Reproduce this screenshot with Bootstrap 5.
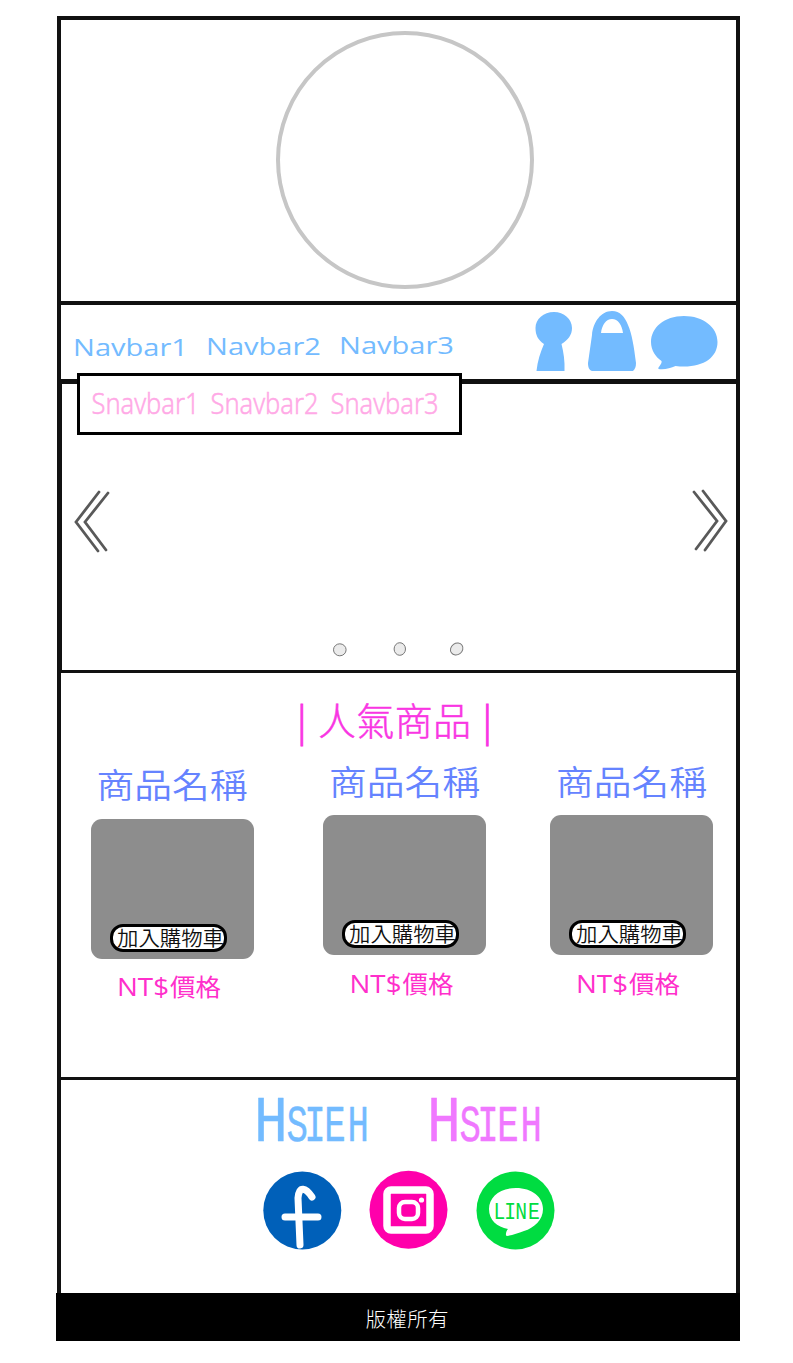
<!DOCTYPE html>
<html lang="zh-Hant">
<head>
<meta charset="utf-8">
<meta name="viewport" content="width=device-width, initial-scale=1">
<title>HSIEH</title>
<link href="https://cdn.jsdelivr.net/npm/bootstrap@5.3.0/dist/css/bootstrap.min.css" rel="stylesheet">
<style>
  body { background: #fff; font-family: "Open Sans", "Noto Sans CJK TC", sans-serif; }
  svg { display: block; overflow: visible; }
  a { text-decoration: none; }
  .frame { width: 683px; margin: 16px 0 0 57px; border: 4px solid #111; border-bottom: 0; }
  .masthead { height: 285px; border-bottom: 4px solid #111; padding-top: 11px; }
  .logo-ring { width: 258px; height: 258px; border: 4px solid #c6c6c6; margin-left: 13px; }
  .mainnav { height: 79px; border-bottom: 5px solid #111; padding: 0 18px 0 12px; }
  .nav-words text { font-size: 24px; fill: #73bbff; }
  .subnav { left: 16px; top: 68px; width: 385px; height: 62px; border: 3.5px solid #000; background: #fff; z-index: 2; }
  .subnav text { font-size: 28.5px; font-family: "Noto Sans", "Open Sans", sans-serif; font-weight: 300; fill: #ffa9e6; stroke: #ffa9e6; stroke-width: .5; }
  .slider { height: 289px; border-bottom: 3px solid #111; border-left: 1px solid #111; }
  .arrow { stroke: #595959; stroke-width: 2.8; fill: none; stroke-linecap: round; }
  .popular { height: 407px; border-bottom: 3px solid #111; }
  .heading-text { font-size: 38px; fill: #f935e3; stroke: #f935e3; stroke-width: .5; font-family: "Noto Sans CJK TC", sans-serif; font-weight: 300; }
  .goods { padding: 0 23px 0 29.5px; margin-top: 18px; }
  .item { width: 163px; }
  .item-mid { margin-left: 4.5px; }
  .item-name { font-size: 34px; fill: #6583ff; font-family: "Noto Sans CJK TC", sans-serif; font-weight: 350; }
  .thumb { height: 140px; background: #8d8d8d; border-radius: 11px; margin-top: 11px; padding: 0 0 7px 19px; }
  .cart-btn { width: 117px; height: 28px; border: 3px solid #000; border-radius: 13px; background: #fff; }
  .cart-btn text { fill: #111; font-size: 20.5px; font-family: "Noto Sans CJK TC", sans-serif; font-weight: 350; }
  .price { fill: #ff2fcb; font-size: 24px; margin-top: 13px; }
  .wordmark { font-family: "Liberation Mono", monospace; font-size: 51px; stroke-width: .4; stroke-linejoin: round; }
  .wordmark .initial { font-size: 64px; }
  .brandzone { height: 213px; }
  .copy { height: 48px; background: #000; margin: 0 -4px 0 -5px; }
</style>
</head>
<body>
<main class="frame">
  <header class="masthead d-flex justify-content-center">
    <div class="logo-ring rounded-circle"></div>
  </header>

  <nav class="mainnav position-relative d-flex">
    <svg class="nav-words" width="380" height="60">
      <a href="#"><text x="0" y="51" textLength="115" lengthAdjust="spacingAndGlyphs">Navbar1</text></a>
      <a href="#"><text x="133" y="50" textLength="115" lengthAdjust="spacingAndGlyphs">Navbar2</text></a>
      <a href="#"><text x="266" y="49" textLength="115" lengthAdjust="spacingAndGlyphs">Navbar3</text></a>
    </svg>
    <svg class="ms-auto" width="183" height="70" viewBox="535 305 183 70" fill="#73bbff">
      <path d="M554 312c10 0 18 7 18 16 0 7-4 12-10.500 16 2 8 3.500 17 3 27h-28c1-10 4-19 7.500-27-6-4-8.500-9-8.500-16 0-9 8-16 18.500-16z"/>
      <path fill-rule="evenodd" d="M612 311c8 0 13 6 16 14 4 9 6 22 8 38 0 4-1 6-3 8h-41c-3-1-4-4-4-8l4-28c1-13 9-24 20-24zM601 333h22c-1-8-5-14-11-14s-10 6-11 14z"/>
      <path d="M684 316c19 0 33.500 11 33.500 26 0 17-17 27-42 24-5 2-11 4-17 3-1-2 4-5 3-8-6-4-10.500-11-10.500-19 0-14 13-26 33-26z"/>
    </svg>
    <div class="subnav position-absolute">
      <svg width="370" height="50">
        <a href="#"><text x="11.500" y="38" textLength="108" lengthAdjust="spacingAndGlyphs">Snavbar1</text></a>
        <a href="#"><text x="130.500" y="38" textLength="108" lengthAdjust="spacingAndGlyphs">Snavbar2</text></a>
        <a href="#"><text x="250.500" y="38" textLength="108" lengthAdjust="spacingAndGlyphs">Snavbar3</text></a>
      </svg>
    </div>
  </nav>

  <section class="slider">
    <svg width="674" height="286" viewBox="62 384 674 286">
      <path class="arrow" d="M99 492L76 522L98 551M108 493L85 522L106 550"/>
      <path class="arrow" d="M694 492L717 521L696 549M703 491L726 521L705 550"/>
      <g fill="#ebebeb" stroke="#777">
        <ellipse cx="339.800" cy="649.800" rx="6.300" ry="6"/>
        <ellipse cx="399.800" cy="649" rx="5.700" ry="6.300"/>
        <ellipse cx="456.700" cy="649" rx="6.500" ry="5.600" transform="rotate(-35 456.700 649)"/>
      </g>
    </svg>
  </section>

  <section class="popular pt-4">
    <svg class="heading-text" width="675" height="52" viewBox="61 697 675 52">
      <text x="297" y="735.500" stroke-width="1">|</text>
      <text x="318" y="735" textLength="153">人氣商品</text>
      <text x="482.500" y="735.500" stroke-width="1">|</text>
    </svg>
    <div class="goods d-flex justify-content-between">
      <article class="item mt-1">
        <svg class="item-name" width="163" height="37"><text x="5.500" y="27" textLength="151" lengthAdjust="spacingAndGlyphs">商品名稱</text></svg>
        <div class="thumb d-flex align-items-end">
          <button class="cart-btn p-0"><svg width="111" height="22"><text x="4" y="18.500" textLength="107" lengthAdjust="spacingAndGlyphs">加入購物車</text></svg></button>
        </div>
        <svg class="price" width="163" height="34"><text x="26" y="24" textLength="52" lengthAdjust="spacingAndGlyphs" font-size="25">NT$</text><text x="79" y="24" textLength="51" lengthAdjust="spacingAndGlyphs">價格</text></svg>
      </article>
      <article class="item item-mid">
        <svg class="item-name" width="163" height="37"><text x="6" y="28" textLength="151" lengthAdjust="spacingAndGlyphs">商品名稱</text></svg>
        <div class="thumb d-flex align-items-end">
          <button class="cart-btn p-0"><svg width="111" height="22"><text x="4" y="18.500" textLength="107" lengthAdjust="spacingAndGlyphs">加入購物車</text></svg></button>
        </div>
        <svg class="price" width="163" height="34"><text x="26.500" y="25" textLength="52" lengthAdjust="spacingAndGlyphs" font-size="25">NT$</text><text x="79.500" y="25" textLength="51" lengthAdjust="spacingAndGlyphs">價格</text></svg>
      </article>
      <article class="item">
        <svg class="item-name" width="163" height="37"><text x="6" y="28" textLength="151" lengthAdjust="spacingAndGlyphs">商品名稱</text></svg>
        <div class="thumb d-flex align-items-end">
          <button class="cart-btn p-0"><svg width="111" height="22"><text x="4" y="18.500" textLength="107" lengthAdjust="spacingAndGlyphs">加入購物車</text></svg></button>
        </div>
        <svg class="price" width="163" height="34"><text x="26" y="25" textLength="52" lengthAdjust="spacingAndGlyphs" font-size="25">NT$</text><text x="79" y="25" textLength="51" lengthAdjust="spacingAndGlyphs">價格</text></svg>
      </article>
    </div>
  </section>

  <footer>
    <div class="brandzone">
      <svg width="675" height="213" viewBox="61 1080 675 213">
        <g class="wordmark" fill="#73bbff" stroke="#73bbff">
          <text class="initial" transform="translate(254 1141) scale(.88 1)">H</text>
          <text transform="translate(286.500 1140.500) scale(.7 1)" x="0 25.500 54 87">SIEH</text>
        </g>
        <g class="wordmark" fill="#f078ff" stroke="#f078ff">
          <text class="initial" transform="translate(427 1141) scale(.88 1)">H</text>
          <text transform="translate(459.500 1140.500) scale(.7 1)" x="0 25.500 54 87">SIEH</text>
        </g>
        <circle cx="302.300" cy="1210.500" r="39" fill="#0060b9"/>
        <path d="M312 1197c-6-9-13-12-14 1l2 47M285 1217h33" fill="none" stroke="#fff" stroke-width="7" stroke-linecap="round" stroke-linejoin="round"/>
        <circle cx="408.500" cy="1209.800" r="39" fill="#ff00ab"/>
        <rect x="387" y="1190" width="43" height="40" rx="4" fill="none" stroke="#fff" stroke-width="7.500"/>
        <rect x="399" y="1202" width="19" height="17" rx="6" fill="none" stroke="#fff" stroke-width="4.500"/>
        <circle cx="421.500" cy="1200" r="2.600" fill="#fff"/>
        <circle cx="515.500" cy="1210.500" r="39" fill="#00dc41"/>
        <path d="M516 1188c16 0 27 9 27 21 0 11-9 19-19 22-6 2-11 4-17 5-2 0-1-5 1-7-11-2-19-9-19-20 0-12 11-21 27-21z" fill="#fff"/>
        <text transform="translate(493.500 1218.500) scale(.82 1)" font-family="Liberation Mono, monospace" font-size="24" fill="#00dc41" x="0 13 26.500 42">LINE</text>
      </svg>
    </div>
    <div class="copy">
      <svg width="684" height="48" fill="#fff" font-family="Noto Sans CJK TC, sans-serif" font-weight="300" font-size="20.500"><text x="309.500" y="33.500" textLength="83">版權所有</text></svg>
    </div>
  </footer>
</main>
<script src="https://cdn.jsdelivr.net/npm/bootstrap@5.3.0/dist/js/bootstrap.bundle.min.js"></script>
</body>
</html>
